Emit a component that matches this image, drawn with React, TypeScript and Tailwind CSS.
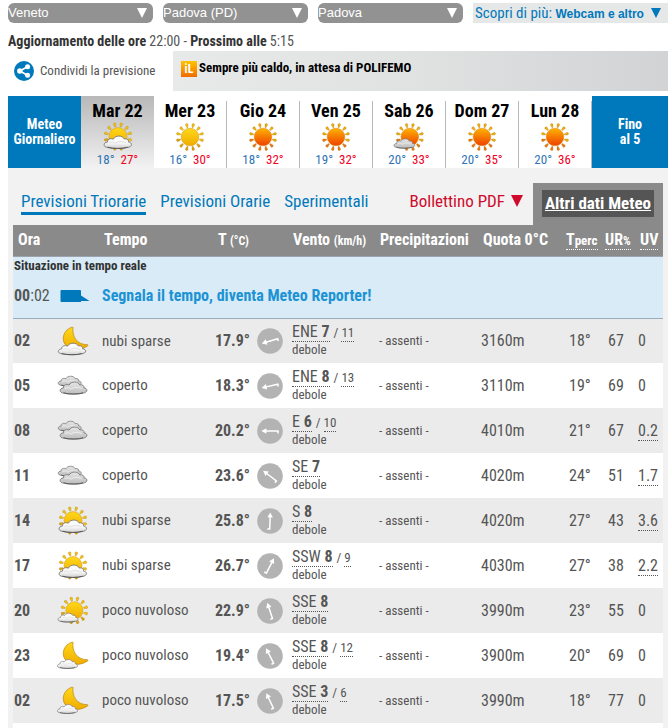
import React from 'react';

type WeatherKind =
  | 'sun'
  | 'hot-sun'
  | 'sun-cloud'
  | 'sun-small-cloud'
  | 'hot-sun-small-cloud'
  | 'moon-cloud'
  | 'moon-small-cloud'
  | 'overcast';

interface Day {
  label: string;
  icon: WeatherKind;
  min: number;
  max: number;
}

interface Forecast {
  hour: string;
  icon: WeatherKind;
  sky: string;
  temp: string;
  windDir: string;
  windSpeed: number;
  gust?: number;
  angle: number;
  zero: string;
  feels: string;
  humidity: number;
  uv: string;
}

const days: Day[] = [
  { label: 'Mar 22', icon: 'sun-cloud', min: 18, max: 27 },
  { label: 'Mer 23', icon: 'sun', min: 16, max: 30 },
  { label: 'Gio 24', icon: 'hot-sun', min: 18, max: 32 },
  { label: 'Ven 25', icon: 'hot-sun', min: 19, max: 32 },
  { label: 'Sab 26', icon: 'hot-sun-small-cloud', min: 20, max: 33 },
  { label: 'Dom 27', icon: 'hot-sun', min: 20, max: 35 },
  { label: 'Lun 28', icon: 'hot-sun', min: 20, max: 36 },
];

const forecasts: Forecast[] = [
  { hour: '02', icon: 'moon-cloud', sky: 'nubi sparse', temp: '17.9°', windDir: 'ENE', windSpeed: 7, gust: 11, angle: 253, zero: '3160m', feels: '18°', humidity: 67, uv: '0' },
  { hour: '05', icon: 'overcast', sky: 'coperto', temp: '18.3°', windDir: 'ENE', windSpeed: 8, gust: 13, angle: 257, zero: '3110m', feels: '19°', humidity: 69, uv: '0' },
  { hour: '08', icon: 'overcast', sky: 'coperto', temp: '20.2°', windDir: 'E', windSpeed: 6, gust: 10, angle: 270, zero: '4010m', feels: '21°', humidity: 67, uv: '0.2' },
  { hour: '11', icon: 'overcast', sky: 'coperto', temp: '23.6°', windDir: 'SE', windSpeed: 7, angle: 307, zero: '4020m', feels: '24°', humidity: 51, uv: '1.7' },
  { hour: '14', icon: 'sun-cloud', sky: 'nubi sparse', temp: '25.8°', windDir: 'S', windSpeed: 8, angle: 2, zero: '4020m', feels: '27°', humidity: 43, uv: '3.6' },
  { hour: '17', icon: 'sun-cloud', sky: 'nubi sparse', temp: '26.7°', windDir: 'SSW', windSpeed: 8, gust: 9, angle: 27, zero: '4030m', feels: '27°', humidity: 38, uv: '2.2' },
  { hour: '20', icon: 'sun-small-cloud', sky: 'poco nuvoloso', temp: '22.9°', windDir: 'SSE', windSpeed: 8, angle: 342, zero: '3990m', feels: '23°', humidity: 55, uv: '0' },
  { hour: '23', icon: 'moon-small-cloud', sky: 'poco nuvoloso', temp: '19.4°', windDir: 'SSE', windSpeed: 8, gust: 12, angle: 333, zero: '3900m', feels: '20°', humidity: 69, uv: '0' },
  { hour: '02', icon: 'moon-small-cloud', sky: 'poco nuvoloso', temp: '17.5°', windDir: 'SSE', windSpeed: 3, gust: 6, angle: 335, zero: '3990m', feels: '18°', humidity: 77, uv: '0' },
];

const Gradients = () => (
  <svg className="absolute h-0 w-0" aria-hidden="true">
    <defs>
      <linearGradient id="sun-fill" x1="0" y1="0" x2="0" y2="1">
        <stop offset="0" stopColor="#ffd91a" />
        <stop offset="1" stopColor="#f0ac00" />
      </linearGradient>
      <linearGradient id="hot-fill" x1="0" y1="0" x2="0" y2="1">
        <stop offset="0" stopColor="#ffb400" />
        <stop offset="1" stopColor="#ee3f00" />
      </linearGradient>
      <linearGradient id="white-cloud" x1="0" y1="0" x2="0" y2="1">
        <stop offset="0" stopColor="#ffffff" />
        <stop offset="0.6" stopColor="#f4f4f4" />
        <stop offset="1" stopColor="#cfcfcf" />
      </linearGradient>
      <linearGradient id="grey-cloud" x1="0" y1="0" x2="0" y2="1">
        <stop offset="0" stopColor="#e6e6e6" />
        <stop offset="1" stopColor="#bdbdbd" />
      </linearGradient>
    </defs>
  </svg>
);

const Sun = ({ x, y, r, hot }: { x: number; y: number; r: number; hot?: boolean }) => (
  <g transform={`translate(${x} ${y})`}>
    {Array.from({ length: 12 }, (_, i) => {
      const low = i > 3 && i < 9;
      return (
        <path
          key={i}
          d={`M-1.4 ${-r - 4.2} Q0 ${-r - 6.2} 1.4 ${-r - 4.2} L0.5 ${-r - 1} L-0.5 ${-r - 1} Z`}
          transform={`rotate(${i * 30 + 15})`}
          fill={hot ? (low ? '#e9750f' : '#eeb00c') : low ? '#dda30a' : '#f2c20c'}
          stroke="#a8791c"
          strokeWidth="0.3"
        />
      );
    })}
    <circle r={r} fill={hot ? 'url(#hot-fill)' : 'url(#sun-fill)'} stroke={hot ? '#e08a18' : '#d9a010'} strokeWidth="0.6" />
  </g>
);

const Cloud = ({ x, y, sx = 1, sy = 1, grey }: { x: number; y: number; sx?: number; sy?: number; grey?: boolean }) => (
  <g transform={`translate(${x} ${y}) scale(${sx} ${sy})`}>
    <path
      d="M5 12.4 C-0.8 12.4 -0.8 7 4 6.6 C3.4 3.4 7.4 2.2 9.6 3.6 C11.6 -0.8 19 -0.8 20.6 3.4 C23.6 2.6 25.4 4.6 24.8 6.6 C29 7 29.4 12 23 12.4 C20 13.6 8 13.6 5 12.4 Z"
      fill={grey ? 'url(#grey-cloud)' : 'url(#white-cloud)'}
      stroke="#747474"
      strokeWidth="0.9"
    />
    <path d="M5.4 7.6 C8 5.8 10.4 6.6 11.6 8 C14 5.6 19 5.4 22.6 7.6" fill="none" stroke={grey ? '#f2f2f2' : '#dedede'} strokeWidth="0.9" />
    <path d="M4 12 C9 13.8 19 13.8 24 12" fill="none" stroke="#4e4e4e" strokeWidth="0.9" />
  </g>
);

const Moon = () => (
  <path
    d="M16 2.4 C15 10.5 19 19.6 30.6 19.8 C31.4 20.2 31 20.8 30.2 21.2 C22 26.4 12 25 8 19.2 C4 13.4 7 4.6 15 2.2 C15.6 2 16 2 16 2.4 Z"
    fill="url(#sun-fill)"
    stroke="#b98511"
    strokeWidth="0.7"
  />
);

const WeatherIcon = ({ kind, label }: { kind: WeatherKind; label: string }) => (
  <svg viewBox="0 0 32 32" className="block h-8 w-8" role="img" aria-label={label}>
    {kind === 'sun' && <Sun x={16} y={16} r={8.8} />}
    {kind === 'hot-sun' && <Sun x={16} y={16} r={8.8} hot />}
    {kind === 'sun-cloud' && (
      <>
        <Sun x={16} y={15.6} r={9} />
        <Cloud x={1.6} y={14.8} sy={0.95} />
      </>
    )}
    {kind === 'sun-small-cloud' && (
      <>
        <Sun x={17.4} y={15.4} r={8.6} />
        <Cloud x={0.6} y={18} sx={0.73} sy={0.68} />
      </>
    )}
    {kind === 'hot-sun-small-cloud' && (
      <>
        <Sun x={16.8} y={16} r={8.8} hot />
        <Cloud x={0.6} y={17.6} sx={0.76} sy={0.72} grey />
      </>
    )}
    {kind === 'moon-cloud' && (
      <>
        <Moon />
        <Cloud x={0.8} y={18} sy={0.88} />
      </>
    )}
    {kind === 'moon-small-cloud' && (
      <>
        <Moon />
        <Cloud x={0} y={19.4} sx={0.74} sy={0.68} />
      </>
    )}
    {kind === 'overcast' && (
      <>
        <Cloud x={0.8} y={6} sx={0.84} sy={0.76} grey />
        <Cloud x={2.6} y={11.8} sx={0.98} sy={0.92} grey />
      </>
    )}
  </svg>
);

const WindArrow = ({ angle, label }: { angle: number; label: string }) => (
  <svg viewBox="0 0 26 26" className="block h-[26px] w-[26px]" role="img" aria-label={label}>
    <circle cx="13" cy="13" r="12.8" fill="#b3b3b3" />
    <g transform={`rotate(${angle} 13 13)`}>
      <path d="M13 8 V21 H10.6" fill="none" stroke="#fff" strokeWidth="1.5" />
      <path d="M13 4.4 L15.8 9.4 H10.2 Z" fill="#fff" />
    </g>
  </svg>
);

const PlaceSelect = ({ label, value }: { label: string; value: string }) => (
  <div className="relative h-5 flex-[145_145_145px]">
    <select
      aria-label={label}
      defaultValue={value}
      className="block h-5 w-full appearance-none rounded-md bg-[#929292] p-0 font-['Liberation_Sans',sans-serif] text-[13px] leading-5 text-white"
    >
      <option>{value}</option>
    </select>
    <svg viewBox="0 0 10 10" className="pointer-events-none absolute top-[5px] right-1.5 h-2.5 w-2.5" aria-hidden="true">
      <path d="M0 0 H10 L5 10 Z" fill="#fff" />
    </svg>
  </div>
);

const ForecastRow = ({ item }: { item: Forecast }) => (
  <tr className="h-[45px] text-base odd:bg-[#ebebeb] even:bg-white">
    <td className="pl-px font-bold">{item.hour}</td>
    <td>
      <WeatherIcon kind={item.icon} label={item.sky} />
    </td>
    <td className="pl-0.5 text-[15px]">{item.sky}</td>
    <td className="text-right font-bold">{item.temp}</td>
    <td className="pl-[7px]">
      <WindArrow angle={item.angle} label={`Vento da ${item.windDir}`} />
    </td>
    <td className="pl-0.5">
      <div className="flex items-baseline gap-1 leading-4 whitespace-nowrap">
        <span className="border-b border-dotted border-[#555] pb-px">
          {item.windDir} <b>{item.windSpeed}</b>
        </span>
        {item.gust && (
          <span className="text-[13px]">
            / <span className="border-b border-dotted border-[#555] pb-px">{item.gust}</span>
          </span>
        )}
      </div>
      <div className="text-[13px] leading-4">debole</div>
    </td>
    <td className="pl-0.5 text-[13px]">- assenti -</td>
    <td className="pl-0.5">{item.zero}</td>
    <td className="pl-1.5">{item.feels}</td>
    <td className="pl-2">{item.humidity}</td>
    <td className="pl-0.5">
      <span className={item.uv === '0' ? '' : 'border-b border-dotted border-[#555]'}>{item.uv}</span>
    </td>
  </tr>
);

const App: React.FC = () => {
  return (
    <div className="bg-white pt-[3px] pr-0.5 pl-2 font-['Roboto_Condensed','Liberation_Sans_Narrow','Liberation_Sans',sans-serif] text-[#555]">
      <Gradients />

      <form className="flex gap-2.5">
        <PlaceSelect label="Regione" value="Veneto" />
        <PlaceSelect label="Provincia" value="Padova (PD)" />
        <PlaceSelect label="Località" value="Padova" />
        <button type="button" className="flex h-5 flex-[195_195_195px] items-center justify-between bg-[#e6e7e7] pr-[7px] pl-0.5 text-[15px] leading-5 whitespace-nowrap text-[#0079bc]">
          <span>
            Scopri di più: <b className="font-['Liberation_Sans',sans-serif] text-xs">Webcam e altro</b>
          </span>
          <svg viewBox="0 0 10 10" className="h-2.5 w-2.5" aria-hidden="true">
            <path d="M0 0 H10 L5 10 Z" fill="#0079bc" />
          </svg>
        </button>
      </form>

      <p className="pt-[9px] pb-px text-sm leading-[18px]">
        <b className="text-[#333]">Aggiornamento delle ore</b> 22:00 - <b className="text-[#333]">Prossimo alle</b> 5:15
      </p>

      <div className="flex h-10">
        <button type="button" className="flex w-[165px] shrink-0 items-center gap-1.5 pl-1.5 text-[13px] whitespace-nowrap">
          <svg viewBox="0 0 20 20" className="h-5 w-5" aria-hidden="true">
            <circle cx="10" cy="10" r="10" fill="#0079bc" />
            <path d="M13.4 5.8 L6 10 L13.4 14.2" fill="none" stroke="#fff" strokeWidth="1.8" />
            <circle cx="13.6" cy="5.7" r="2.5" fill="#fff" />
            <circle cx="5.8" cy="10" r="2.7" fill="#fff" />
            <circle cx="13.6" cy="14.3" r="2.5" fill="#fff" />
          </svg>
          Condividi la previsione
        </button>
        <a href="#polifemo" className="flex flex-1 items-start gap-0.5 bg-linear-to-r from-[#e8e9e9] via-[#e0e1e1] to-[#d2d3d5] pt-2 pl-2 text-[13px] leading-[18px] font-bold text-black">
          <span className="mt-0.5 flex h-4 w-4 items-center justify-center bg-linear-to-b from-[#ffc400] to-[#ef6a00] text-xs font-bold text-white">iL</span>
          Sempre più caldo, in attesa di POLIFEMO
        </a>
      </div>

      <nav className="mt-[5px] flex h-[72px] text-center">
        <a href="#giornaliero" className="flex flex-[73] items-center justify-center bg-[#0079bc] text-sm leading-[15px] font-bold text-white">
          Meteo
          <br />
          Giornaliero
        </a>
        {days.map((day, i) => (
          <a
            key={day.label}
            href={`#giorno-${i}`}
            className={`flex flex-[73] flex-col ${i === 0 ? 'bg-linear-to-b from-[#b8b8b8] to-[#f2f2f2]' : ''}`}
          >
            <span className={`mt-[5px] flex flex-1 flex-col items-center ${i > 0 ? 'border-r border-[#b8b8b8]' : ''}`}>
              <span className="text-lg leading-5 font-bold text-black">{day.label}</span>
              <WeatherIcon kind={day.icon} label={day.label} />
              <span className="flex gap-1.5 text-[13px] leading-[14px]">
                <span className="text-[#2e74b5]">{day.min}°</span>
                <span className="text-[#f0001c]">{day.max}°</span>
              </span>
            </span>
          </a>
        ))}
        <a href="#fino" className="flex flex-[76] items-center justify-center bg-[#0079bc] text-sm leading-[15px] font-bold text-white">
          Fino
          <br />
          al 5
        </a>
      </nav>

      <main className="bg-[#f2f2f2] px-[5px]">
        <div className="flex h-[57px] items-end justify-between pl-2">
          <div className="flex gap-3.5 pb-2.5 text-[17px] leading-[22px] text-[#0079bc]">
            <a href="#triorarie" className="border-b-3 border-[#0079bc]">Previsioni Triorarie</a>
            <a href="#orarie">Previsioni Orarie</a>
            <a href="#sperimentali">Sperimentali</a>
          </div>
          <div className="flex items-end gap-2.5">
            <button type="button" className="flex items-center gap-1.5 pb-3 text-[17px] leading-6 whitespace-nowrap text-[#cf0a2c]">
              Bollettino PDF
              <svg viewBox="0 0 12 12" className="h-3 w-3" aria-hidden="true">
                <path d="M0 0 H12 L6 12 Z" fill="#cf0a2c" />
              </svg>
            </button>
            <div className="h-[42px] w-[130px] bg-[#8a8a8a] px-[9px] py-[7px]">
              <a href="#altri" className="block bg-[#555] text-center text-[17px] leading-[27px] font-bold whitespace-nowrap text-white underline">
                Altri dati Meteo
              </a>
            </div>
          </div>
        </div>

        <table className="w-full table-fixed border-collapse text-left">
          <colgroup>
            <col className="w-[44px]" />
            <col className="w-[43px]" />
            <col />
            <col className="w-[47px]" />
            <col className="w-[40px]" />
            <col className="w-[87px]" />
            <col className="w-[102px]" />
            <col className="w-[84px]" />
            <col className="w-[37px]" />
            <col className="w-[36px]" />
            <col className="w-[27px]" />
          </colgroup>
          <thead>
            <tr className="h-[31px] border-b border-[#9aa3ae] bg-[#8a8a8a] text-base whitespace-nowrap text-white">
              <th colSpan={2} className="pl-[5px]">Ora</th>
              <th className="pl-1">Tempo</th>
              <th className="pr-px text-right">T <span className="text-xs">(°C)</span></th>
              <th colSpan={2} className="pl-[43px]">Vento <span className="text-xs">(km/h)</span></th>
              <th className="pl-[3px]">Precipitazioni</th>
              <th className="pl-1">Quota 0°C</th>
              <th className="pl-[3px]">
                <span className="border-b border-dotted border-white">T<span className="text-[13px]">perc</span></span>
              </th>
              <th className="pl-[5px]">
                <span className="border-b border-dotted border-white">UR<span className="text-xs">%</span></span>
              </th>
              <th className="pl-1">
                <span className="border-b border-dotted border-white">UV</span>
              </th>
            </tr>
            <tr className="h-[62px] border-b border-[#9aacbb] bg-[#d8ebf6] align-top">
              <td colSpan={11} className="pl-px">
                <div className="pt-px text-[13px] leading-4 font-bold text-[#333]">Situazione in tempo reale</div>
                <div className="flex items-center pt-2.5 text-base leading-6">
                  <span className="w-[46px]"><b>00</b>:02</span>
                  <svg viewBox="0 0 30 14" className="mr-3 h-3.5 w-[30px]" aria-hidden="true">
                    <path d="M1.5 1 H20 Q21 1 21 2 V6.5 L29.5 12 H21 V13 H1.5 Q0.5 13 0.5 12 V2 Q0.5 1 1.5 1 Z" fill="#0079bc" />
                  </svg>
                  <a href="#reporter" className="font-bold text-[#1c93d4]">Segnala il tempo, diventa Meteo Reporter!</a>
                </div>
              </td>
            </tr>
          </thead>
          <tbody>
            {forecasts.map((item, i) => (
              <ForecastRow key={i} item={item} />
            ))}
          </tbody>
        </table>
        <div className="h-[5px] bg-white" />
      </main>
    </div>
  );
};

export default App;
